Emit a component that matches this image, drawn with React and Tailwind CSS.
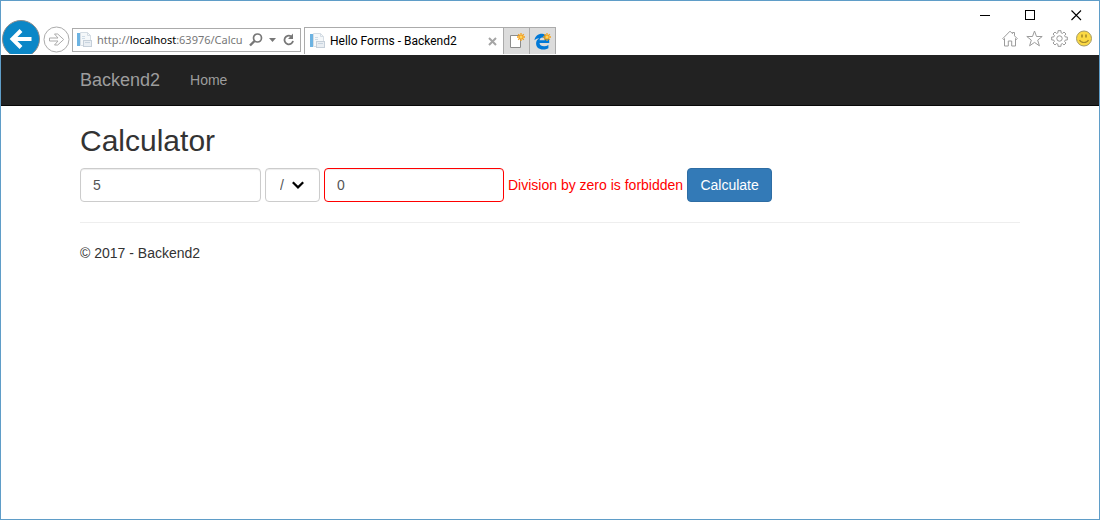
import React from "react";

function PageIcon() {
  return (
    <svg className="size-4 shrink-0" viewBox="0 0 16 16" aria-hidden="true">
      <path d="M3.500 .5h7l3 3v10h-10z" fill="#f5f8fa" stroke="#d5dde4" />
      <path d="M10.500 .5v3h3" fill="none" stroke="#d5dde4" />
      <rect x="0" y="1" width="3" height="13" fill="#6cb3e2" />
      <path d="M5 4.500h3M5 6.500h3" stroke="#cfdce7" />
      <rect x="6.500" y="8.500" width="8" height="6" fill="#e9eef3" stroke="#c5cfd9" />
      <path d="M8 10.500h5" stroke="#c8d4df" />
    </svg>
  );
}

function Spark() {
  return (
    <g stroke="#f5a21b" strokeWidth="1.300">
      <path d="M13 0v8M9 4h8M10.200 1.200l5.600 5.600M15.800 1.200l-5.600 5.600" />
      <circle cx="13" cy="4" r="1.500" fill="#ffd35c" stroke="none" />
    </g>
  );
}

function CaptionBar() {
  return (
    <div className="flex h-[26px] items-end justify-end">
      <button aria-label="Minimize" className="flex h-6 w-[45px] items-center justify-center">
        <svg className="size-[11px]" viewBox="0 0 11 11">
          <path d="M0 5.500h10" stroke="#000" />
        </svg>
      </button>
      <button aria-label="Maximize" className="flex h-6 w-[45px] items-center justify-center">
        <svg className="size-[11px]" viewBox="0 0 11 11">
          <rect x="0.500" y="0.500" width="9" height="9" fill="none" stroke="#000" />
        </svg>
      </button>
      <button aria-label="Close" className="flex h-6 w-[46px] items-center justify-center">
        <svg className="size-[11px]" viewBox="0 0 11 11">
          <path d="M0.500 0.500l9.500 9.500M10 0.500l-9.500 9.500" stroke="#000" strokeWidth="1.100" />
        </svg>
      </button>
    </div>
  );
}

function AddressBar() {
  return (
    <div className="mb-[3px] ml-0.5 flex h-6 w-[229px] shrink-0 items-center border border-[#ababab] bg-white pr-1 pl-1">
      <PageIcon />
      <div className="ml-1 w-[148px] font-['Noto_Sans','Open_Sans',sans-serif] text-[11px] leading-4 whitespace-nowrap text-[#777]">
        http://<span className="text-black">localhost</span>:63976/Calcu
      </div>
      <button aria-label="Search" className="ml-1 shrink-0">
        <svg className="block h-4 w-[14px]" viewBox="0 0 14 16" fill="none" stroke="#777">
          <circle cx="8.500" cy="6" r="4" strokeWidth="1.700" />
          <path d="M5.500 9L1 13.500" strokeWidth="2.400" />
        </svg>
      </button>
      <button aria-label="Show address bar history" className="ml-1.5 shrink-0">
        <svg className="block h-4 w-[7px]" viewBox="0 0 7 16">
          <path d="M0 6h7L3.500 10z" fill="#777" />
        </svg>
      </button>
      <button aria-label="Refresh" className="ml-[7px] shrink-0">
        <svg className="block h-4 w-3" viewBox="0 0 12 16" fill="none" stroke="#777">
          <path d="M8 4.300A4.300 4.300 0 1 0 10 8.800" strokeWidth="1.800" />
          <path d="M10 1.500v5.500H5z" fill="#777" stroke="none" />
        </svg>
      </button>
    </div>
  );
}

function BrowserTools() {
  return (
    <div className="mr-1.5 mb-2 ml-auto flex shrink-0 gap-2">
      <button aria-label="Home page">
        <svg className="block h-[17px] w-4" viewBox="0 0 16 17" fill="none" stroke="#9b9b9b">
          <path d="M0.700 8.700L8 1.200l2.500 2.500V2.500h2v3.300l2.800 2.900-.8.800-1-1v7.500H9.700v-5H6.300v5H2.500V8.500l-1 1z" />
        </svg>
      </button>
      <button aria-label="Favorites">
        <svg className="block size-[17px]" viewBox="0 0 17 17" fill="none" stroke="#9b9b9b">
          <path d="M8.500 1l2 5.500h5.700l-4.500 3.600 1.700 5.700-4.900-3.400-4.900 3.400 1.700-5.700L.8 6.500h5.700z" />
        </svg>
      </button>
      <button aria-label="Tools">
        <svg className="block size-[17px]" viewBox="0 0 17 17" fill="none" stroke="#9b9b9b">
          <path d="M7 .7h3v2l1.500.7L13 2l2 2-1.400 1.500.7 1.500h2v3h-2l-.7 1.500L15 13l-2 2-1.500-1.400-1.500.7v2H7v-2l-1.500-.7L4 15l-2-2 1.400-1.500L2.700 10h-2V7h2l.7-1.500L2 4l2-2 1.500 1.400L7 2.700z" />
          <circle cx="8.500" cy="8.500" r="2.700" />
        </svg>
      </button>
      <button aria-label="Send a smile">
        <svg className="block size-[17px]" viewBox="0 0 17 17">
          <circle cx="8" cy="8.500" r="7.500" fill="#fbd944" stroke="#a49a68" />
          <path d="M6 4.500v3M10 4.500v3" stroke="#a58a2a" strokeWidth="1.600" />
          <path d="M3.500 10c1.500 3.300 7.500 3.300 9 0" fill="none" stroke="#a58a2a" strokeWidth="1.200" />
        </svg>
      </button>
    </div>
  );
}

function Toolbar() {
  return (
    <div className="flex h-7 items-end">
      <button aria-label="Back" className="mb-px ml-px shrink-0">
        <svg className="block h-[34px] w-[38px]" viewBox="0 0 38 34">
          <circle cx="19" cy="19" r="18.500" fill="#0b87c7" stroke="#8b8b8b" />
          <path d="M29.500 19H12M19 10.500L10.500 19l8.500 8.500" fill="none" stroke="#fff" strokeWidth="4" />
        </svg>
      </button>
      <button aria-label="Forward" className="mb-0.5 ml-[3px] shrink-0">
        <svg className="block size-[27px]" viewBox="0 0 27 27" fill="none" stroke="#ababab">
          <circle cx="13.500" cy="13.500" r="12.500" />
          <path d="M6.500 12h8.500l-3.500-4h3.200l6 5.500-6 5.500h-3.200l3.500-4H6.500z" />
        </svg>
      </button>
      <AddressBar />
      <div className="mb-px ml-[3px] flex h-[27px] w-[200px] shrink-0 items-center border-x border-t border-[#ababab] bg-white pr-1.5 pl-[5px]">
        <PageIcon />
        <span className="ml-1 grow text-[12px] leading-4 whitespace-nowrap text-black">Hello Forms - Backend2</span>
        <button aria-label="Close tab">
          <svg className="block size-[9px]" viewBox="0 0 9 9">
            <path d="M1 1l7 7M8 1L1 8" stroke="#a5a5a5" strokeWidth="2" />
          </svg>
        </button>
      </div>
      <button aria-label="New tab" className="mb-px flex h-[27px] w-[26px] shrink-0 items-center justify-center border-t border-r border-[#ababab] bg-[#dcdcdc]">
        <svg className="h-4 w-[17px]" viewBox="0 0 17 16">
          <path d="M2.500 2.500h10v12h-10z" fill="#fff" stroke="#8c8c8c" />
          <Spark />
        </svg>
      </button>
      <button aria-label="Open Microsoft Edge" className="mb-px flex h-[27px] w-[26px] shrink-0 items-center justify-center border-t border-r border-[#ababab] bg-[#dcdcdc]">
        <svg className="h-[17px] w-[17px]" viewBox="0 0 17 17">
          <path d="M.5 7.300C1 3.300 4 .8 8 .8c4.700 0 7.200 3.200 7.200 7v2.100H5.500c.2 2.300 2.100 3.300 4.600 3.300 1.600 0 3-.4 4.300-1.200v3.200c-1.500.9-3.300 1.300-5.200 1.300-4.400 0-7.100-2.300-7.100-6 0-2.300 1.200-4.200 3.300-5.200C3.300 5.300 1.700 6.100.5 7.300zM5.600 7.200h5.200c0-1.800-.9-2.800-2.500-2.800-1.500 0-2.500 1-2.700 2.800z" fill="#0078d7" />
          <Spark />
        </svg>
      </button>
      <BrowserTools />
    </div>
  );
}

const control =
  "h-[34px] rounded-[4px] border bg-white text-[14px] leading-5 text-[#555] shadow-[inset_0_1px_1px_rgba(0,0,0,0.075)]";

export default function App() {
  return (
    <div className="min-h-screen border border-[#5f9dc8] bg-white font-['Liberation_Sans',Arial,sans-serif] text-[14px] leading-5 text-[#333]">
      <header className="font-[Roboto,'Open_Sans',sans-serif]">
        <CaptionBar />
        <Toolbar />
      </header>
      <nav className="border-b border-[#080808] bg-[#222]">
        <div className="mx-auto flex h-[50px] max-w-[970px] items-center gap-[30px] px-[15px] text-[#9d9d9d]">
          <a href="#" className="text-[18px]">Backend2</a>
          <a href="#home">Home</a>
        </div>
      </nav>
      <main className="mx-auto max-w-[970px] px-[15px]">
        <h1 className="pt-[18px] pb-[11px] text-[30px] leading-[33px]">Calculator</h1>
        <form className="flex flex-wrap items-center gap-1" onSubmit={(e) => e.preventDefault()}>
          <input aria-label="First number" defaultValue="5" className={`${control} w-[181px] border-[#ccc] px-3`} />
          <div className="grid items-center">
            <select aria-label="Operation" defaultValue="/" className={`${control} col-start-1 row-start-1 w-[55px] appearance-none border-[#ccc] pl-3.5`}>
              <option>+</option>
              <option>-</option>
              <option>*</option>
              <option>/</option>
            </select>
            <svg className="pointer-events-none col-start-1 row-start-1 mr-4 h-2 w-3 justify-self-end" viewBox="0 0 12 8">
              <path d="M.8 1.200L6 6.400l5.200-5.200" fill="none" stroke="#000" strokeWidth="2.200" />
            </svg>
          </div>
          <input aria-label="Second number" aria-invalid="true" aria-describedby="divisor-error" defaultValue="0" className={`${control} w-[180px] border-[#f00] px-3`} />
          <span id="divisor-error" className="text-[#f00]">Division by zero is forbidden</span>
          <button type="submit" className="h-[34px] w-[85px] rounded-[4px] border border-[#2e6da4] bg-[#337ab7] text-white">Calculate</button>
        </form>
        <hr className="my-5 border-[#eee]" />
        <footer>
          <p>© 2017 - Backend2</p>
        </footer>
      </main>
    </div>
  );
}
